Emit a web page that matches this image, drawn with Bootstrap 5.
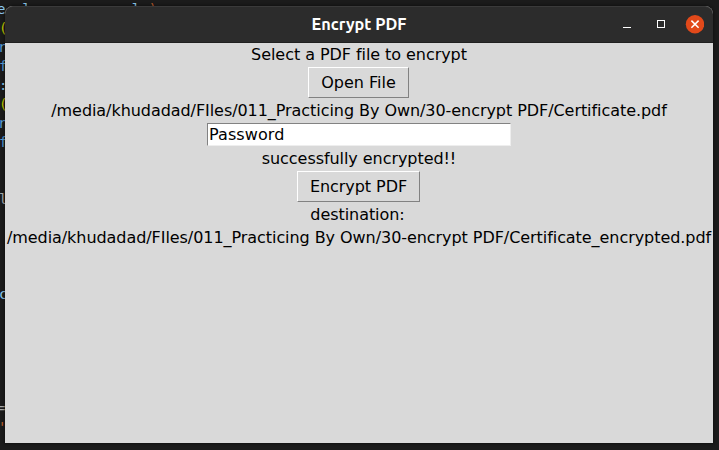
<!DOCTYPE html>
<html lang="en">
<head>
<meta charset="utf-8">
<meta name="viewport" content="width=device-width, initial-scale=1">
<title>Encrypt PDF</title>
<link href="https://cdn.jsdelivr.net/npm/bootstrap@5.3.0/dist/css/bootstrap.min.css" rel="stylesheet">
<style>
  body { height: 450px; background: #1b1b1b; font-family: "DejaVu Sans", sans-serif; font-size: 16px; line-height: 23px; color: #000; }
  /* editor behind the window */
  .editor { left: 0; top: 0; width: 719px; height: 450px; }
  .code-line { position: absolute; font-family: "DejaVu Sans Mono", monospace; font-size: 14px; line-height: 19px; white-space: pre; }
  .c-blue { color: #569cd6; } .c-sky { color: #8cc8ee; } .c-gold { color: #c3c800; } .c-grey { color: #aaa; } .c-orange { color: #c0602c; }
  /* application window */
  .app-window { left: 5px; top: 6px; width: 708px; height: 437px; background: #d9d9d9; border-radius: 8px 8px 0 0; box-shadow: 0 0 3px 1px rgba(0,0,0,.4); }
  .title-bar { height: 37px; background: #2c2c2c; border-top: 1px solid #3a3a3a; border-bottom: 1px solid #202020; border-radius: 8px 8px 0 0; padding-right: 9px; }
  .title-text { font-family: Ubuntu, "Noto Sans", sans-serif; font-size: 16.3px; font-weight: 700; line-height: 35px; color: #fff; }
  .controls svg { display: block; }
  .tk-label { height: 23px; white-space: nowrap; letter-spacing: -.06px; }
  .tk-trailing { padding-right: 3px; }
  .tk-button { height: 31px; margin: 1px 0; border: 1px solid; border-color: #fff #828282 #828282 #fff; border-radius: 0; background: #d9d9d9; color: #000; font-size: 16px; line-height: 28px; padding: 0; }
  .open-btn { width: 101px; margin-right: 1px; }
  .encrypt-btn { width: 123px; margin-right: 1px; letter-spacing: -.06px; }
  .tk-entry { width: 304px; height: 23px; margin: 1px 0; border: 1px solid; border-color: #828282 #eee #eee #828282; border-radius: 0; background: #fff; color: #000; font-size: 16px; line-height: 21px; padding: 0 1px; letter-spacing: .08px; }
</style>
<script src="https://cdn.jsdelivr.net/npm/bootstrap@5.3.0/dist/js/bootstrap.bundle.min.js"></script>
</head>
<body class="position-relative overflow-hidden m-0">
  <div class="editor position-absolute overflow-hidden" aria-hidden="true">
    <div class="code-line c-sky" style="left:-3px;top:0">e  l            l <span class="c-orange">)</span></div>
    <div class="code-line c-gold" style="left:-1px;top:19px">(</div>
    <div class="code-line c-blue" style="left:-2px;top:38px">r</div>
    <div class="code-line c-blue" style="left:-1px;top:57px">f</div>
    <div class="code-line c-sky" style="left:-1px;top:76px">:</div>
    <div class="code-line c-gold" style="left:-1px;top:95px">(</div>
    <div class="code-line c-blue" style="left:-2px;top:114px">r</div>
    <div class="code-line c-blue" style="left:-1px;top:133px">f</div>
    <div class="code-line c-grey" style="left:-1px;top:190px">l</div>
    <div class="code-line c-sky" style="left:-1px;top:285px">c</div>
    <div class="code-line c-grey" style="left:-3px;top:399px">=</div>
    <div class="code-line c-orange" style="left:-2px;top:418px">'</div>
  </div>

  <main class="app-window position-absolute">
    <header class="title-bar position-relative d-flex align-items-center justify-content-end">
      <div class="title-text position-absolute start-0 end-0 text-center">Encrypt PDF</div>
      <div class="controls position-relative d-flex">
        <svg width="86" height="20" viewBox="0 0 86 20" role="img" aria-label="Window controls">
          <path d="M5 12.5h8" stroke="#fff" stroke-width="1" fill="none"/>
          <rect x="39.5" y="5.5" width="7" height="7" stroke="#fff" fill="none"/>
          <circle cx="77" cy="9.2" r="9.2" fill="#e2491a"/>
          <path d="M73.4 5.6l7.2 7.2M80.6 5.6l-7.2 7.2" stroke="#fff" stroke-width="1.5" fill="none"/>
        </svg>
      </div>
    </header>
    <section class="d-flex flex-column align-items-center">
      <div class="tk-label">Select a PDF file to encrypt</div>
      <button type="button" class="btn tk-button open-btn">Open File</button>
      <div class="tk-label">/media/khudadad/FIles/011_Practicing By Own/30-encrypt PDF/Certificate.pdf</div>
      <input type="text" class="form-control tk-entry" value="Password" aria-label="Password">
      <div class="tk-label">successfully encrypted!!</div>
      <button type="button" class="btn tk-button encrypt-btn">Encrypt PDF</button>
      <div class="tk-label tk-trailing">destination:</div>
      <div class="tk-label">/media/khudadad/FIles/011_Practicing By Own/30-encrypt PDF/Certificate_encrypted.pdf</div>
    </section>
  </main>
</body>
</html>
